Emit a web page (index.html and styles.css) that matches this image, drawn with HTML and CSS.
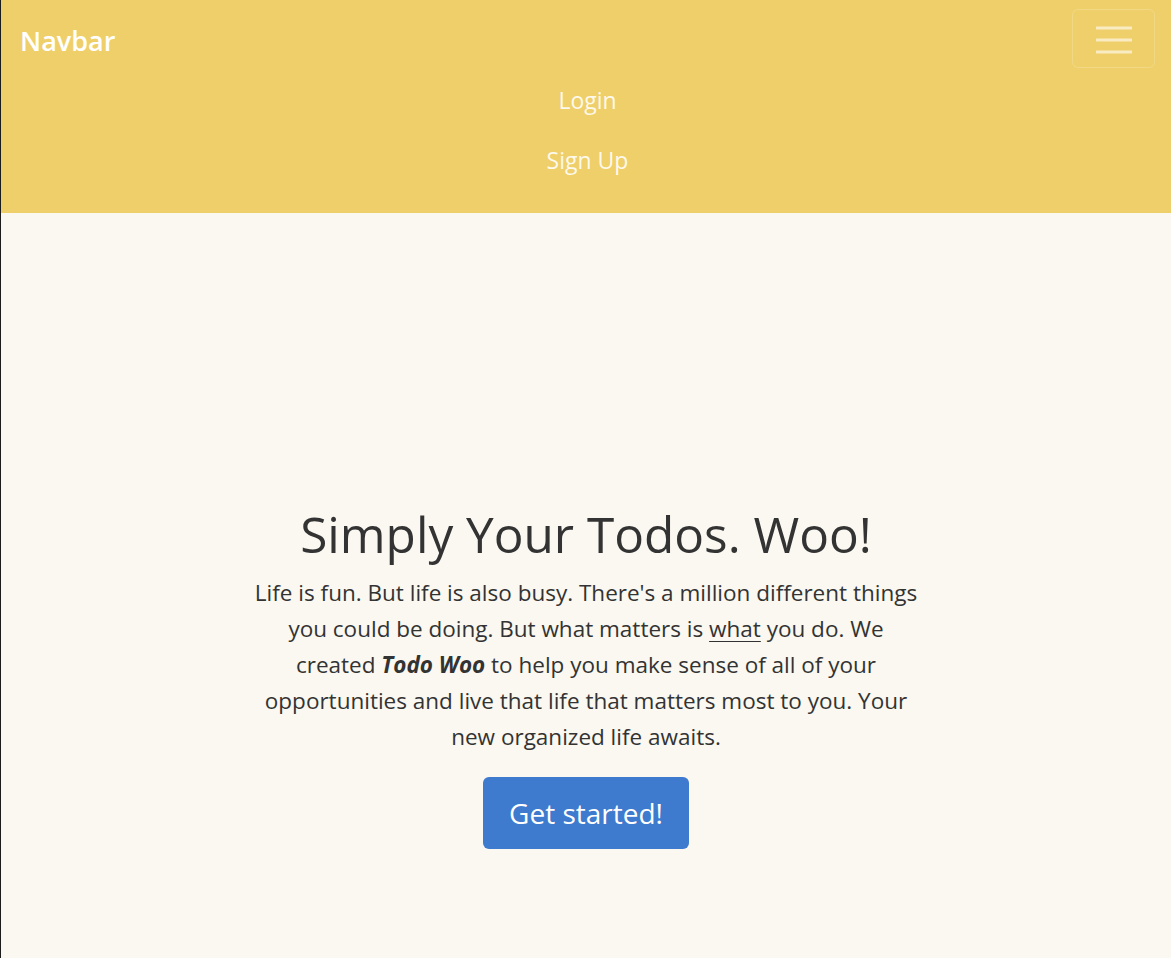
FILE: index.html
```html
<!DOCTYPE html>
<html lang="en">
<head>
<meta charset="utf-8">
<title>Todo Woo</title>
<link rel="stylesheet" href="styles.css">
</head>
<body>
<nav class="navbar">
  <div class="navbar-top">
    <a class="brand" href="#">Navbar</a>
    <button class="toggler" type="button" aria-label="Toggle navigation">
      <svg width="36" height="30" viewBox="0 0 36 30"><path d="M1 4h34M1 16h34M1 28h34" stroke="rgba(255,255,255,0.6)" stroke-width="3" stroke-linecap="round"/></svg>
    </button>
  </div>
  <ul class="nav-links">
    <li><a href="#">Login</a></li>
    <li><a href="#">Sign Up</a></li>
  </ul>
</nav>
<main class="hero">
  <div class="hero-inner">
    <h1 class="hero-title">Simply Your Todos. Woo!</h1>
    <p class="hero-text">Life is fun. But life is also busy. There's a million different things you could be doing. But what matters is <span class="hl-under">what</span> you do. We created <span class="hl-brand">Todo Woo</span> to help you make sense of all of your opportunities and live that life that matters most to you. Your new organized life awaits.</p>
    <a class="btn-start" href="#">Get started!</a>
  </div>
</main>
</body>
</html>
```

FILE: styles.css
```css
* { box-sizing: border-box; }
html, body { margin: 0; padding: 0; }
body {
  font-family: "Open Sans", "Noto Sans", sans-serif;
  background: #faf8f1;
  color: #333333;
  border-left: 1px solid #1c1c1c;
  min-height: 100vh;
}
.navbar {
  background: #efcf6a;
  height: 213px;
  padding: 9px 16px 0 19px;
}
.navbar-top {
  display: flex;
  justify-content: space-between;
  align-items: flex-start;
}
.brand {
  color: #ffffff;
  font-size: 27px;
  font-weight: 600;
  text-decoration: none;
  line-height: 1;
  margin-top: 18px;
}
.toggler {
  width: 83px;
  height: 59px;
  border: 1px solid rgba(255,255,255,0.18);
  border-radius: 6px;
  background: transparent;
  display: flex;
  align-items: center;
  justify-content: center;
  padding: 0;
}
.toggler svg { display: block; }
.nav-links {
  list-style: none;
  margin: 0;
  padding: 0;
  display: flex;
  flex-direction: column;
  align-items: center;
}
.nav-links li { height: 60px; display: flex; align-items: center; }
.nav-links a {
  color: rgba(255,255,255,0.88);
  font-size: 23px;
  text-decoration: none;
}
.nav-links li:first-child { margin-top: 2px; }
.hero {
  padding-top: 290px;
  display: flex;
  justify-content: center;
}
.hero-inner {
  width: 676px;
  text-align: center;
}
.hero-title {
  margin: 0;
  font-size: 49.5px;
  font-weight: 400;
  line-height: 63px;
}
.hero-text {
  margin: 9px 0 22px;
  font-size: 22.5px;
  line-height: 36px;
}
.hl-under {
  text-decoration: underline;
  text-decoration-thickness: 1px;
  text-underline-offset: 4px;
}
.hl-brand { font-weight: 700; font-style: italic; }
.btn-start {
  display: inline-block;
  background: #3e7ace;
  color: #ffffff;
  font-size: 28px;
  text-decoration: none;
  padding: 0 26.5px;
  height: 72px;
  line-height: 72px;
  border-radius: 6px;
}
```
